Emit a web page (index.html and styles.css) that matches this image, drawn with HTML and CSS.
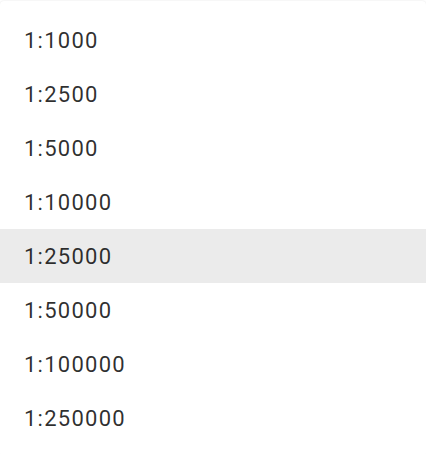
FILE: index.html
```html
<!DOCTYPE html>
<html>
<head>
<meta charset="utf-8">
<link rel="stylesheet" href="styles.css">
</head>
<body>
<div class="menu">
  <ul class="list">
    <li class="item">1:1000</li>
    <li class="item">1:2500</li>
    <li class="item">1:5000</li>
    <li class="item">1:10000</li>
    <li class="item active">1:25000</li>
    <li class="item">1:50000</li>
    <li class="item">1:100000</li>
    <li class="item">1:250000</li>
  </ul>
</div>
</body>
</html>
```
FILE: styles.css
```css
html, body {
  margin: 0;
  padding: 0;
  background: #fff;
  overflow: hidden;
}
body {
  padding-top: 1px;
}
.menu {
  background: #fff;
  border-radius: 4px;
  box-shadow: 0 0 2px rgba(0,0,0,0.12);
  padding: 12px 0;
}
.list {
  list-style: none;
  margin: 0;
  padding: 0;
}
.item {
  height: 54px;
  display: flex;
  align-items: center;
  padding: 0 24px;
  font-family: Roboto, "Liberation Sans", sans-serif;
  font-size: 22px;
  letter-spacing: 1.25px;
  color: rgba(0,0,0,0.82);
}
.item.active {
  background: #ebebeb;
}
```
